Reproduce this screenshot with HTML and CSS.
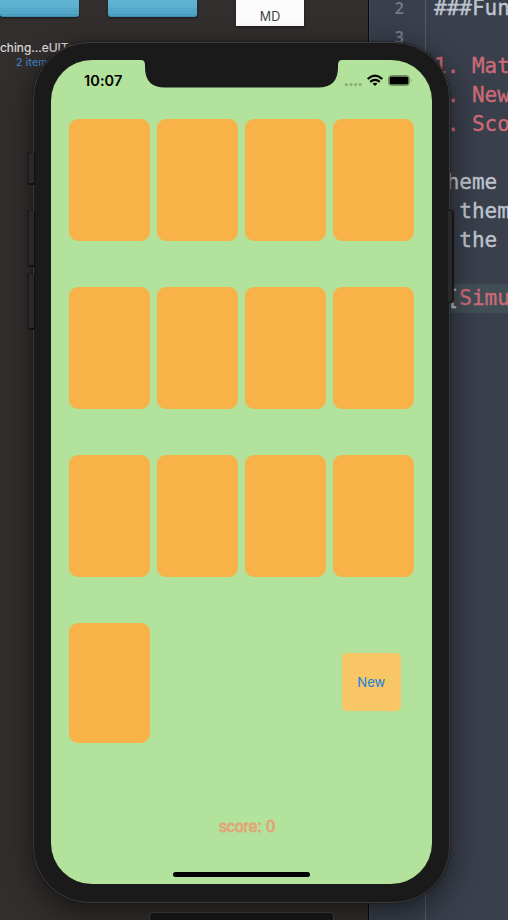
FILE: index.html
```html
<!DOCTYPE html>
<html lang="en">
<head>
<meta charset="utf-8">
<title>Matching Game</title>
<link rel="stylesheet" href="styles.css">
</head>
<body>
<div class="desktop">
  <section class="finder">
    <div class="files">
      <div class="folder first"></div>
      <div class="folder"></div>
      <div class="document">MD</div>
    </div>
    <div class="file-name">ching...eUITests</div>
    <div class="file-info">2 items</div>
    <div class="path-bar"></div>
  </section>
  <section class="editor">
    <div class="gutter"><span>2</span><span>3</span></div>
    <div class="code">
      <div>###Fun</div>
      <div></div>
      <div class="red">1. Mat</div>
      <div class="red">2. New</div>
      <div class="red">3. Sco</div>
      <div></div>
      <div>Theme</div>
      <div>- them</div>
      <div>- the</div>
      <div></div>
      <div class="current">![<span class="red">Simu</span></div>
    </div>
  </section>
  <section class="phone">
    <i class="key mute"></i>
    <i class="key up"></i>
    <i class="key down"></i>
    <i class="key power"></i>
    <div class="screen">
      <svg class="notch" width="201" height="28" viewBox="0 0 201 28"><path d="M0 0H201Q197 0 197 5V7.500Q197 27.500 177 27.500H24Q4 27.500 4 7.500V5Q4 0 0 0Z" fill="#1a1a1a"/></svg>
      <header class="status">
        <span class="time">10:07</span>
        <svg class="status-icons" width="69" height="14" viewBox="0 0 69 14">
          <g fill="#87af77"><circle cx="2.300" cy="11.600" r="1.600"/><circle cx="7" cy="11.600" r="1.600"/><circle cx="11.600" cy="11.600" r="1.600"/><circle cx="16.200" cy="11.600" r="1.600"/></g>
          <g fill="none" stroke="#000" stroke-width="2.200"><path d="M23.700 6Q31 -0.600 38.300 6"/><path d="M26.200 8.900Q31 4.800 35.800 8.900"/></g>
          <path d="M28.500 10.600Q31 8.700 33.500 10.600L31 13.100Z"/>
          <rect x="44.500" y="2.500" width="21" height="10" rx="2.800" fill="none" stroke="#709461"/>
          <rect x="45.500" y="3.500" width="19" height="8" rx="1.600"/>
          <path d="M67 5.800Q68.500 7.500 67 9.200Z" fill="#709461"/>
        </svg>
      </header>
      <main class="board">
        <div class="card"></div><div class="card"></div><div class="card"></div><div class="card"></div>
        <div class="card"></div><div class="card"></div><div class="card"></div><div class="card"></div>
        <div class="card"></div><div class="card"></div><div class="card"></div><div class="card"></div>
        <div class="card"></div>
        <button class="new-game">New</button>
      </main>
      <div class="score">score: 0</div>
      <div class="home-bar"></div>
    </div>
  </section>
</div>
</body>
</html>
```

FILE: styles.css
```css
* { box-sizing: border-box; }
body { margin: 0; }
.desktop {
  position: relative;
  width: 508px;
  height: 920px;
  overflow: hidden;
  display: flex;
  background: #302c2b;
  font-family: Inter, "Liberation Sans", sans-serif;
}
.finder {
  position: relative;
  width: 368px;
  background: #322e2d;
}
.files { display: flex; height: 26px; align-items: flex-start; }
.folder {
  width: 89px;
  height: 17px;
  margin-right: 39px;
  border-radius: 0 0 3px 3px;
  background: linear-gradient(#62b4d5 0, #5aaed0 8px, #479ebf 8px, #5bafcf 9px, #58accd 10px, #479ebf 11px, #58accd 12px, #54a8c9 13px, #459bbc 14px, #52a7c8 15px, #3487a8 17px);
  box-shadow: 0 1px 2px #1c1a1a;
}
.folder.first { width: 79px; margin-right: 29px; }
.document {
  width: 68px;
  height: 26px;
  background: #fcfcfc;
  color: #444;
  font-size: 12.500px;
  line-height: 33px;
  text-align: center;
  box-shadow: 0 1px 2px #181616;
}
.file-name {
  margin-top: 14px;
  font-size: 12px;
  line-height: 16px;
  color: #dedcdc;
  white-space: nowrap;
  -webkit-text-stroke: .2px #dedcdc;
}
.file-info { padding-left: 16px; font-size: 10.500px; line-height: 13px; color: #3f8fd8; letter-spacing: .2px; }
.path-bar {
  position: absolute;
  left: 149px;
  top: 912px;
  width: 185px;
  height: 20px;
  border: 1px solid #454243;
  border-radius: 4px;
  background: #1a191a;
}
.editor {
  width: 140px;
  display: flex;
  overflow: hidden;
  background: #393f4b;
  border-left: 1px solid #090a0d;
  box-shadow: inset 1px 0 #434954;
}
.gutter {
  width: 57px;
  flex: none;
  border-right: 1px solid #555b66;
  display: flex;
  flex-direction: column;
  padding-right: 21px;
  margin-top: -6px;
  color: #747b88;
  font: 600 16px/29px "Noto Sans", sans-serif;
  text-align: right;
}
.code {
  flex: 1;
  margin-top: -6px;
  color: #bfc5cf;
  font: 21px/29px "DejaVu Sans Mono", monospace;
  -webkit-text-stroke: .35px currentColor;
}
.code div { height: 29px; padding-left: 8px; white-space: nowrap; }
.red { color: #cc6b77; }
.code .current { background: #414e56; }
.phone {
  position: absolute;
  left: 33px;
  top: 42px;
  width: 417px;
  height: 861px;
  padding: 17px;
  border: 1px solid #3b3b3b;
  border-radius: 56px;
  background: #1a1a1a;
  box-shadow: 0 0 2px #111, 0 9px 28px 2px rgba(0,0,0,.48);
}
.key {
  position: absolute;
  left: -5px;
  width: 5px;
  background: #292929;
  box-shadow: -1px 0 1px 1.500px #101010;
}
.mute { top: 110px; height: 30px; }
.up { top: 168px; height: 54px; }
.down { top: 231px; height: 54px; }
.power { left: auto; right: -3px; top: 168px; height: 91px; width: 4px; border-radius: 0 1px 1px 0; box-shadow: 1px 0 1px 1px #141414; }
.screen {
  position: relative;
  width: 381px;
  height: 824px;
  border-radius: 41px;
  overflow: hidden;
  background: #b2e29b;
}
.notch { position: absolute; left: 90px; top: 0; }
.status {
  height: 59px;
  padding: 13px 19px 0 33px;
  display: flex;
  align-items: flex-start;
  justify-content: space-between;
}
.time { margin-top: -1px; font-size: 14.500px; font-weight: 600; line-height: 17px; letter-spacing: .1px; }
.status-icons { display: block; }
.board {
  display: grid;
  grid-template-columns: repeat(4, 80.700px);
  grid-template-rows: repeat(3, 121.700px) 120px;
  column-gap: 7.300px;
  row-gap: 46.300px;
  padding-left: 18.300px;
}
.card { border-radius: 9px; background: #f7b347; }
.new-game {
  grid-column: 4;
  align-self: start;
  width: 59px;
  height: 58px;
  margin: 30.500px 0 0 8.500px;
  padding: 0;
  border: 0;
  border-radius: 5px;
  background: #f8c664;
  color: #1681df;
  font: 13px/58px Inter, sans-serif;
}
.score {
  margin-top: 74px;
  padding-left: 11px;
  font: 15.800px/20px "Liberation Sans", sans-serif;
  text-align: center;
  color: #e3a477;
  -webkit-text-stroke: .8px #e3a477;
}
.home-bar {
  width: 137px;
  height: 5px;
  margin: 35px auto 0;
  border-radius: 3px;
  background: #000;
}
```
